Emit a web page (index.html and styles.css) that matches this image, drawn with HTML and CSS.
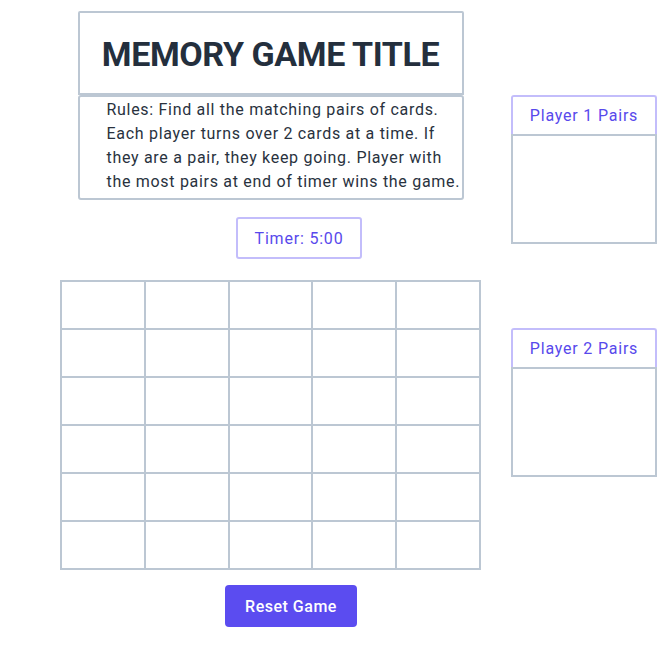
FILE: index.html
```html
<!DOCTYPE html>
<html>
<head>
<meta charset="utf-8">
<link rel="stylesheet" href="styles.css">
</head>
<body>
<div class="page">
  <div class="main">
    <div class="title-box"><h1 class="title">MEMORY GAME TITLE</h1></div>
    <div class="rules">Rules: Find all the matching pairs of cards.<br>Each player turns over 2 cards at a time. If<br>they are a pair, they keep going. Player with<br>the most pairs at end of timer wins the game.</div>
    <div class="timer">Timer: 5:00</div>
    <div class="grid">
      <div class="cell"></div><div class="cell"></div><div class="cell"></div><div class="cell"></div><div class="cell"></div>
      <div class="cell"></div><div class="cell"></div><div class="cell"></div><div class="cell"></div><div class="cell"></div>
      <div class="cell"></div><div class="cell"></div><div class="cell"></div><div class="cell"></div><div class="cell"></div>
      <div class="cell"></div><div class="cell"></div><div class="cell"></div><div class="cell"></div><div class="cell"></div>
      <div class="cell"></div><div class="cell"></div><div class="cell"></div><div class="cell"></div><div class="cell"></div>
      <div class="cell"></div><div class="cell"></div><div class="cell"></div><div class="cell"></div><div class="cell"></div>
    </div>
    <button class="reset">Reset Game</button>
  </div>
  <div class="side">
    <div class="player">
      <div class="player-head">Player 1 Pairs</div>
      <div class="player-body"></div>
    </div>
    <div class="player player-2">
      <div class="player-head">Player 2 Pairs</div>
      <div class="player-body"></div>
    </div>
  </div>
</div>
</body>
</html>
```
FILE: styles.css
```css
html, body {
  margin: 0;
  padding: 0;
  background: #ffffff;
}
body {
  font-family: Roboto, "Liberation Sans", sans-serif;
  color: #1f2937;
}
.page {
  display: flex;
  align-items: flex-start;
  padding: 11px 0 0 60px;
}
.main {
  width: 421px;
  display: flex;
  flex-direction: column;
  align-items: center;
}
.title-box {
  box-sizing: border-box;
  width: 386px;
  height: 84px;
  border: 2px solid #bcc7d3;
  border-radius: 2px 2px 0 0;
  display: flex;
  align-items: center;
  justify-content: center;
}
.title {
  margin: 0;
  font-size: 34px;
  font-weight: 700;
  color: #242f3d;
  letter-spacing: -0.4px;
  padding-top: 2px;
}
.rules {
  box-sizing: border-box;
  width: 386px;
  border: 2px solid #bcc7d3;
  border-radius: 3px;
  padding: 1px 0 4px 27px;
  font-size: 16px;
  line-height: 24px;
  letter-spacing: 0.7px;
  white-space: nowrap;
  color: #29323e;
}
.timer {
  margin-top: 17px;
  margin-left: 57px;
  box-sizing: border-box;
  width: 126px;
  height: 42px;
  border: 2px solid #c3bdfb;
  border-radius: 3px;
  display: flex;
  align-items: center;
  justify-content: center;
  font-size: 16px;
  letter-spacing: 0.8px;
  color: #5849ec;
}
.grid {
  margin-top: 21px;
  box-sizing: border-box;
  width: 421px;
  display: grid;
  grid-template-columns: repeat(5, 1fr);
  border-top: 2px solid #bcc7d3;
  border-left: 2px solid #bcc7d3;
}
.cell {
  height: 46px;
  border-right: 2px solid #bcc7d3;
  border-bottom: 2px solid #bcc7d3;
}
.reset {
  margin-top: 15px;
  margin-left: 41px;
  width: 132px;
  height: 42px;
  border: none;
  border-radius: 4px;
  background: #5b4cf0;
  color: #ffffff;
  font-family: inherit;
  font-size: 16px;
  font-weight: 500;
  letter-spacing: 0.5px;
}
.side {
  margin-left: 30px;
  padding-top: 84px;
  display: flex;
  flex-direction: column;
  gap: 84px;
}
.player {
  width: 146px;
}
.player-head {
  box-sizing: border-box;
  height: 39px;
  border: 2px solid #c3bdfb;
  border-bottom: none;
  border-radius: 3px 3px 0 0;
  display: flex;
  align-items: center;
  justify-content: center;
  font-size: 16px;
  letter-spacing: 0.8px;
  color: #5849ec;
}
.player-body {
  box-sizing: border-box;
  height: 110px;
  border: 2px solid #bcc7d3;
}
```
